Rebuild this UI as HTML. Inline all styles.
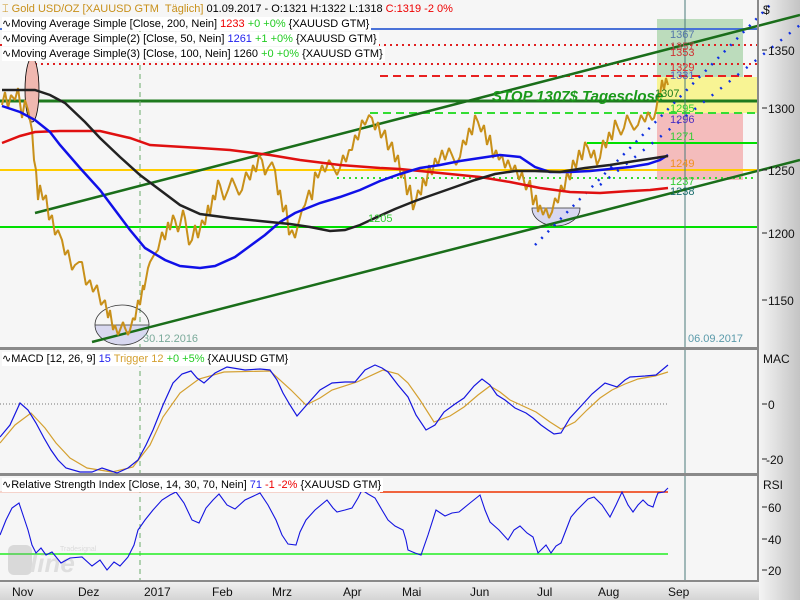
<!DOCTYPE html>
<html><head><meta charset="utf-8"><style>
body{margin:0;width:800px;height:600px;overflow:hidden;background:#f6f6f6;font-family:"Liberation Sans",sans-serif}
svg{position:absolute;left:0;top:0}
.lg{position:absolute;left:2px;font-size:11px;white-space:nowrap;background:#fff;line-height:14px;padding-right:2px;color:#000}
</style></head><body>
<svg width="800" height="600" viewBox="0 0 800 600" font-family="Liberation Sans, sans-serif">
<rect width="800" height="600" fill="#f6f6f6"/>
<defs><linearGradient id="ax" x1="0" x2="1"><stop offset="0" stop-color="#f4f4f4"/><stop offset="1" stop-color="#c4c4c4"/></linearGradient>
<linearGradient id="bx" x1="0" y1="0" x2="0" y2="1"><stop offset="0" stop-color="#f2f2f2"/><stop offset="1" stop-color="#d4d4d4"/></linearGradient></defs>
<rect x="759" y="0" width="41" height="600" fill="url(#ax)"/>
<rect x="0" y="581" width="759" height="19" fill="url(#bx)"/>
<rect x="657" y="19" width="86" height="58" fill="#bcdcbc"/>
<rect x="657" y="77" width="100" height="36" fill="#f8f494"/>
<rect x="657" y="113" width="86" height="67" fill="#f4bcbc"/>
<line x1="0" y1="29" x2="757" y2="29" stroke="#4a72d8" stroke-width="2"/>
<line x1="0" y1="45" x2="757" y2="45" stroke="#e02020" stroke-width="2" stroke-dasharray="2 4"/>
<line x1="35" y1="64" x2="757" y2="64" stroke="#e02020" stroke-width="2" stroke-dasharray="2 4"/>
<line x1="380" y1="76" x2="757" y2="76" stroke="#e82020" stroke-width="2" stroke-dasharray="8 5"/>
<line x1="0" y1="101" x2="757" y2="101" stroke="#1e7a1e" stroke-width="3"/>
<line x1="370" y1="113" x2="757" y2="113" stroke="#33dd33" stroke-width="2" stroke-dasharray="8 5"/>
<line x1="587" y1="143" x2="757" y2="143" stroke="#00e000" stroke-width="2"/>
<line x1="0" y1="170" x2="757" y2="170" stroke="#ffcc00" stroke-width="2"/>
<line x1="337" y1="178" x2="757" y2="178" stroke="#33dd33" stroke-width="2" stroke-dasharray="2 4"/>
<line x1="0" y1="227" x2="757" y2="227" stroke="#00e000" stroke-width="2"/>
<line x1="140" y1="20" x2="140" y2="581" stroke="#6aaa6a" stroke-dasharray="5 4"/>
<line x1="685" y1="0" x2="685" y2="581" stroke="#4a7a7a"/>
<ellipse cx="32" cy="90" rx="7" ry="32" fill="#f0b8b0" stroke="#000" stroke-width="0.8"/>
<path d="M95,325 A27,20 0 0 0 149,325 Z" fill="#d8d8f0" stroke="#333" stroke-width="0.8"/>
<path d="M95,325 A27,20 0 0 1 149,325" fill="none" stroke="#333" stroke-width="0.8"/>
<path d="M532,208 A24,18 0 0 0 580,208 Z" fill="#d8d8f0" stroke="#333" stroke-width="0.8"/>
<line x1="35" y1="213" x2="800" y2="15" stroke="#1a6e1a" stroke-width="2.5"/>
<line x1="92" y1="342" x2="800" y2="160" stroke="#1a6e1a" stroke-width="2.5"/>
<line x1="535" y1="245" x2="770" y2="5" stroke="#1030e0" stroke-width="2.5" stroke-dasharray="2 7"/>
<line x1="600" y1="185" x2="800" y2="25" stroke="#1030e0" stroke-width="2.5" stroke-dasharray="2 9"/>
<polyline fill="none" stroke="#c8901a" stroke-width="2" stroke-linejoin="bevel" points="2,105 5,92 8,108 11,95 15,100 18,88 22,118 25,100 28,110 32,130 34,160 36,170 38,200 40,185 43,200 46,195 49,220 52,215 55,235 58,230 62,240 65,255 68,250 72,270 75,265 79,262 82,262 86,285 90,280 93,292 97,285 101,305 105,300 108,318 110,310 113,330 115,325 118,335 120,330 123,322 125,328 128,335 130,330 133,318 135,320 138,300 140,305 143,285 144,290 148,268 150,262 154,255 158,250 162,232 165,240 168,222 170,230 173,215 175,220 178,232 180,225 183,210 185,218 189,245 192,240 195,225 198,238 202,220 205,225 208,205 210,215 213,195 215,200 218,180 220,185 224,200 228,190 232,178 235,185 239,195 242,190 246,172 250,180 253,165 256,172 259,155 262,160 265,175 268,168 272,162 275,170 278,195 280,190 283,212 286,205 289,235 292,230 295,238 298,225 302,210 305,205 309,190 312,200 315,172 318,178 322,165 325,172 329,160 332,165 337,175 340,168 343,155 346,162 349,150 352,150 355,135 358,140 362,120 365,125 369,115 372,118 375,130 378,122 381,138 385,130 388,150 392,142 395,162 398,155 401,178 404,170 407,195 410,185 413,210 416,200 418,190 421,195 423,178 426,186 429,165 432,175 435,158 438,165 442,150 445,160 449,148 452,155 456,165 460,157 463,140 466,145 469,128 472,135 475,115 478,122 481,132 484,125 487,145 490,135 493,158 496,150 499,160 502,155 505,168 508,160 512,172 515,165 519,180 522,172 526,190 530,180 533,205 536,195 538,212 540,205 543,215 546,208 549,218 552,212 555,198 558,203 561,185 564,192 567,172 570,180 573,160 576,168 579,150 582,160 585,142 588,148 591,158 594,150 597,165 600,158 603,140 606,148 609,132 612,140 615,120 618,128 621,135 624,128 627,115 630,122 634,130 638,125 641,115 645,122 648,112 652,120 654,118 656,110 658,98 660,95 662,80 664,90 666,78 668,85"/>
<polyline fill="none" stroke="#e01010" stroke-width="2.5" points="2,143 20,136 35,132 60,131 100,131 130,138 150,145 200,148 230,150 270,155 300,160 340,165 380,168 400,169 440,173 480,177 510,182 540,188 570,192 600,193 630,191 650,190 668,188"/>
<polyline fill="none" stroke="#1010e8" stroke-width="2.5" points="2,106 20,112 35,120 50,132 60,145 80,168 100,190 115,210 130,230 145,248 165,260 180,266 200,268 215,266 235,257 250,246 265,235 280,222 295,213 320,203 340,197 360,190 380,181 400,174 420,168 440,165 460,161 480,158 500,155 520,157 535,167 550,172 570,172 590,171 610,169 630,167 648,164 660,160 668,155"/>
<polyline fill="none" stroke="#222" stroke-width="2.5" points="2,90 35,90 50,95 65,103 85,122 100,138 120,157 140,175 160,190 180,205 200,214 230,218 260,221 290,224 310,227 330,231 345,230 360,225 375,218 395,209 415,201 435,194 455,187 475,180 495,174 515,171 535,171 560,172 585,168 610,165 635,161 655,158 668,156"/>
<text x="492" y="101" font-size="15" font-weight="bold" font-style="italic" fill="#1a9a1a">STOP 1307$ Tagesclose</text>
<g font-size="11">
<text x="670" y="38" fill="#5577aa">1367</text>
<text x="670" y="50" fill="#b05050">1357</text>
<text x="670" y="56" fill="#d03030">1353</text>
<text x="670" y="71" fill="#e03030">1329</text>
<text x="670" y="79" fill="#5a60c0">1331</text>
<text x="655" y="97" fill="#1a7a1a">1307</text>
<text x="670" y="112" fill="#33cc33">1295</text>
<text x="670" y="123" fill="#5030c0">1296</text>
<text x="670" y="140" fill="#33cc33">1271</text>
<text x="670" y="167" fill="#f09020">1249</text>
<text x="670" y="185" fill="#33cc33">1237</text>
<text x="670" y="195" fill="#1a6e6e">1238</text>
<text x="368" y="222" fill="#33cc33">1205</text>
<text x="143" y="342" fill="#7aaa9a">30.12.2016</text>
<text x="688" y="342" fill="#5a9aaa">06.09.2017</text>
</g>
<rect x="0" y="347" width="759" height="3" fill="#8a8a8a"/>
<rect x="0" y="473" width="759" height="3" fill="#8a8a8a"/>
<rect x="0" y="580" width="759" height="2" fill="#8a8a8a"/>
<rect x="757" y="0" width="2" height="582" fill="#8a8a8a"/>
<line x1="0" y1="404" x2="668" y2="404" stroke="#777" stroke-dasharray="1 2"/>
<polyline fill="none" stroke="#d4a030" stroke-width="1.2" points="0,443 15,425 31,413 45,428 56,443 70,458 87,468 112,472 133,467 150,445 163,417 180,393 199,379 224,372 270,371 291,390 306,405 320,398 332,390 357,382 383,370 398,374 408,383 420,400 434,422 450,416 464,407 478,395 490,386 500,392 510,400 536,412 550,422 561,429 575,422 587,410 600,398 612,390 625,384 638,379 655,376 668,372"/>
<polyline fill="none" stroke="#1515e0" stroke-width="1.2" points="0,437 10,425 20,403 28,410 36,423 44,438 51,450 58,460 66,468 80,472 92,472 102,468 117,473 128,468 138,460 146,445 153,430 163,405 173,383 182,374 191,371 197,378 204,383 215,373 227,367 245,370 260,369 270,370 277,380 283,393 290,405 297,416 304,408 311,400 320,390 332,383 345,382 355,382 365,370 375,365 382,368 388,372 398,385 408,397 416,415 426,430 435,425 444,412 455,404 464,398 474,386 482,379 490,385 497,395 505,400 515,408 526,413 533,418 541,425 548,430 554,434 561,433 570,418 582,405 592,394 605,383 617,387 625,380 630,377 645,376 656,375 662,370 668,365"/>
<line x1="0" y1="492" x2="380" y2="492" stroke="#f4b0a0" stroke-width="1"/>
<line x1="380" y1="492" x2="668" y2="492" stroke="#ee3300" stroke-width="1.5"/>
<line x1="0" y1="554" x2="668" y2="554" stroke="#22ee22" stroke-width="1.5"/>
<g opacity="0.3"><rect x="8" y="545" width="24" height="30" rx="6" fill="#999"/><text x="30" y="572" font-size="26" font-weight="bold" font-style="italic" fill="#aaa">line</text><text x="60" y="551" font-size="7" fill="#999">Tradesignal</text></g>
<polyline fill="none" stroke="#1515e0" stroke-width="1.1" points="0,535 6,520 12,508 19,503 24,518 28,530 32,545 36,553 41,548 46,555 52,552 61,563 70,558 82,557 92,566 100,560 107,570 114,562 120,566 128,557 134,545 138,530 145,520 153,510 162,500 170,495 176,492 184,503 192,520 199,523 206,508 213,500 219,494 227,505 235,509 245,500 260,493 268,505 276,520 282,535 288,544 296,545 300,532 306,520 315,510 327,500 333,508 337,512 345,510 352,508 358,498 362,490 368,494 375,498 382,510 388,520 395,526 403,530 406,540 408,550 415,553 421,555 428,535 436,510 445,516 452,513 459,512 470,503 480,495 485,510 490,522 499,530 508,540 514,530 520,526 527,533 533,537 538,553 546,545 551,553 556,546 561,543 566,530 571,517 577,510 582,505 588,499 594,497 602,505 610,517 616,505 622,492 628,505 633,512 638,505 643,500 648,505 653,507 656,498 658,493 664,492 668,488"/>
<g stroke="#222"><line x1="762" y1="50" x2="767" y2="50"/><line x1="762" y1="108" x2="767" y2="108"/><line x1="762" y1="170" x2="767" y2="170"/><line x1="762" y1="233" x2="767" y2="233"/><line x1="762" y1="300" x2="767" y2="300"/><line x1="762" y1="404" x2="767" y2="404"/><line x1="762" y1="459" x2="767" y2="459"/><line x1="762" y1="507" x2="767" y2="507"/><line x1="762" y1="539" x2="767" y2="539"/><line x1="762" y1="570" x2="767" y2="570"/></g>
<g font-size="12" fill="#111">
<text x="763" y="14">$</text>
<text x="768" y="55">1350</text><text x="768" y="113">1300</text><text x="768" y="175">1250</text><text x="768" y="238">1200</text><text x="768" y="305">1150</text>
<text x="763" y="363">MAC</text><text x="768" y="409">0</text><text x="766" y="464">-20</text>
<text x="763" y="489">RSI</text><text x="768" y="512">60</text><text x="768" y="544">40</text><text x="768" y="575">20</text>
<text x="12" y="596">Nov</text><text x="78" y="596">Dez</text><text x="144" y="596">2017</text><text x="212" y="596">Feb</text><text x="272" y="596">Mrz</text><text x="343" y="596">Apr</text><text x="402" y="596">Mai</text><text x="470" y="596">Jun</text><text x="537" y="596">Jul</text><text x="598" y="596">Aug</text><text x="668" y="596">Sep</text>
</g>
</svg>
<div class="lg" style="top:2px;background:transparent"><span style="color:#c8901a">⌶ Gold USD/OZ [XAUUSD GTM&nbsp; Täglich]</span> 01.09.2017 - O:1321 H:1322 L:1318 <span style="color:#e00">C:1319 -2 0%</span></div>
<div class="lg" style="top:17px">∿Moving Average Simple [Close, 200, Nein] <span style="color:#e00">1233</span> <span style="color:#2c2">+0 +0%</span> {XAUUSD GTM}</div>
<div class="lg" style="top:32px">∿Moving Average Simple(2) [Close, 50, Nein] <span style="color:#22e">1261</span> <span style="color:#2c2">+1 +0%</span> {XAUUSD GTM}</div>
<div class="lg" style="top:47px">∿Moving Average Simple(3) [Close, 100, Nein] 1260 <span style="color:#2c2">+0 +0%</span> {XAUUSD GTM}</div>
<div class="lg" style="top:352px">∿MACD [12, 26, 9] <span style="color:#22e">15</span> <span style="color:#d4a030">Trigger 12</span> <span style="color:#2c2">+0 +5%</span> {XAUUSD GTM}</div>
<div class="lg" style="top:478px">∿Relative Strength Index [Close, 14, 30, 70, Nein] <span style="color:#22e">71</span> <span style="color:#e00">-1 -2%</span> {XAUUSD GTM}</div>
</body></html>
